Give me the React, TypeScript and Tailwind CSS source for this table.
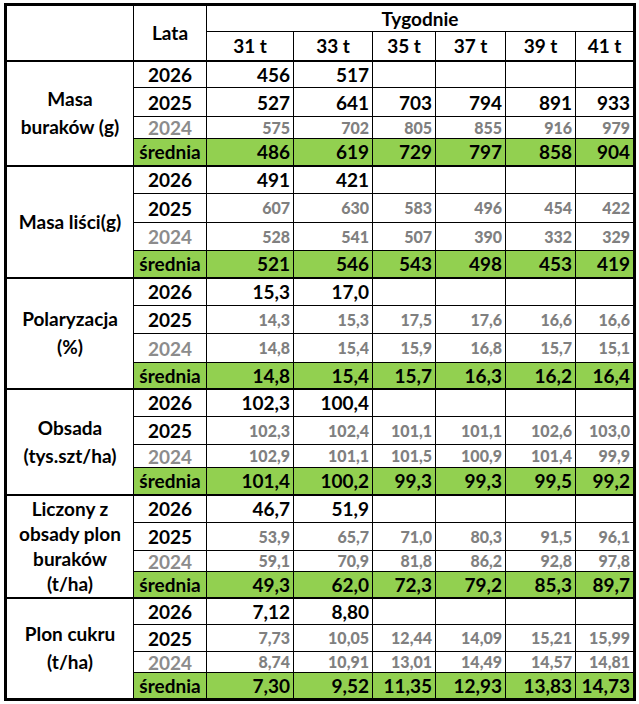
type Kind = 'black' | 'gray' | 'avg';

type Row = {
  year: string;
  kind: Kind;
  h: string;
  values: string[];
};

type Group = {
  label: string[];
  leading: string;
  rows: Row[];
};

const weeks = ['31 t', '33 t', '35 t', '37 t', '39 t', '41 t'];

const groups: Group[] = [
  {
    label: ['Masa', 'buraków (g)'],
    leading: 'leading-[28px]',
    rows: [
      { year: '2026', kind: 'black', h: 'h-[27px]', values: ['456', '517', '', '', '', ''] },
      { year: '2025', kind: 'black', h: 'h-[29px]', values: ['527', '641', '703', '794', '891', '933'] },
      { year: '2024', kind: 'gray', h: 'h-[22px]', values: ['575', '702', '805', '855', '916', '979'] },
      { year: 'średnia', kind: 'avg', h: 'h-[27px]', values: ['486', '619', '729', '797', '858', '904'] },
    ],
  },
  {
    label: ['Masa liści(g)'],
    leading: 'leading-[28px]',
    rows: [
      { year: '2026', kind: 'black', h: 'h-[28px]', values: ['491', '421', '', '', '', ''] },
      { year: '2025', kind: 'gray', h: 'h-[29px]', values: ['607', '630', '583', '496', '454', '422'] },
      { year: '2024', kind: 'gray', h: 'h-[28px]', values: ['528', '541', '507', '390', '332', '329'] },
      { year: 'średnia', kind: 'avg', h: 'h-[27px]', values: ['521', '546', '543', '498', '453', '419'] },
    ],
  },
  {
    label: ['Polaryzacja', '(%)'],
    leading: 'leading-[28px]',
    rows: [
      { year: '2026', kind: 'black', h: 'h-[28px]', values: ['15,3', '17,0', '', '', '', ''] },
      { year: '2025', kind: 'gray', h: 'h-[28px]', values: ['14,3', '15,3', '17,5', '17,6', '16,6', '16,6'] },
      { year: '2024', kind: 'gray', h: 'h-[29px]', values: ['14,8', '15,4', '15,9', '16,8', '15,7', '15,1'] },
      { year: 'średnia', kind: 'avg', h: 'h-[26px]', values: ['14,8', '15,4', '15,7', '16,3', '16,2', '16,4'] },
    ],
  },
  {
    label: ['Obsada', '(tys.szt/ha)'],
    leading: 'leading-[28px]',
    rows: [
      { year: '2026', kind: 'black', h: 'h-[28px]', values: ['102,3', '100,4', '', '', '', ''] },
      { year: '2025', kind: 'gray', h: 'h-[28px]', values: ['102,3', '102,4', '101,1', '101,1', '102,6', '103,0'] },
      { year: '2024', kind: 'gray', h: 'h-[23px]', values: ['102,9', '101,1', '101,5', '100,9', '101,4', '99,9'] },
      { year: 'średnia', kind: 'avg', h: 'h-[27px]', values: ['101,4', '100,2', '99,3', '99,3', '99,5', '99,2'] },
    ],
  },
  {
    label: ['Liczony z', 'obsady plon', 'buraków', '(t/ha)'],
    leading: 'leading-[25px]',
    rows: [
      { year: '2026', kind: 'black', h: 'h-[28px]', values: ['46,7', '51,9', '', '', '', ''] },
      { year: '2025', kind: 'gray', h: 'h-[28px]', values: ['53,9', '65,7', '71,0', '80,3', '91,5', '96,1'] },
      { year: '2024', kind: 'gray', h: 'h-[21px]', values: ['59,1', '70,9', '81,8', '86,2', '92,8', '97,8'] },
      { year: 'średnia', kind: 'avg', h: 'h-[26px]', values: ['49,3', '62,0', '72,3', '79,2', '85,3', '89,7'] },
    ],
  },
  {
    label: ['Plon cukru', '(t/ha)'],
    leading: 'leading-[28px]',
    rows: [
      { year: '2026', kind: 'black', h: 'h-[27px]', values: ['7,12', '8,80', '', '', '', ''] },
      { year: '2025', kind: 'gray', h: 'h-[27px]', values: ['7,73', '10,05', '12,44', '14,09', '15,21', '15,99'] },
      { year: '2024', kind: 'gray', h: 'h-[21px]', values: ['8,74', '10,91', '13,01', '14,49', '14,57', '14,81'] },
      { year: 'średnia', kind: 'avg', h: 'h-[27px]', values: ['7,30', '9,52', '11,35', '12,93', '13,83', '14,73'] },
    ],
  },
];

const valueClass: Record<Kind, string> = {
  black: 'text-[19px] text-black',
  gray: 'text-[16px] font-black text-[#808080]',
  avg: 'text-[19px] text-black bg-[#92d050]',
};

const yearClass: Record<string, string> = {
  '2026': 'text-black',
  '2025': 'text-black',
  '2024': 'text-[#8c8c8c]',
  'średnia': 'text-black bg-[#92d050]',
};

export default function App() {
  return (
    <div className="min-h-screen bg-white pl-[4px] pt-[3px] font-['Lato',sans-serif] font-bold">
      <table className="w-[629px] table-fixed border-collapse border-[3px] border-black">
        <colgroup>
          <col className="w-[128px]" />
          <col className="w-[73px]" />
          <col className="w-[87px]" />
          <col className="w-[79px]" />
          <col className="w-[63px]" />
          <col className="w-[70px]" />
          <col className="w-[70px]" />
          <col className="w-[59px]" />
        </colgroup>
        <thead>
          <tr className="h-[27px]">
            <th rowSpan={2} className="border border-b-2 border-black" />
            <th rowSpan={2} className="border border-b-2 border-black text-center text-[19px] font-bold">
              Lata
            </th>
            <th colSpan={6} className="border border-black text-center text-[19px] font-bold leading-none">
              Tygodnie
            </th>
          </tr>
          <tr className="h-[29px]">
            {weeks.map((w) => (
              <th key={w} className="border border-b-2 border-black text-center text-[19px] font-bold leading-none">
                {w}
              </th>
            ))}
          </tr>
        </thead>
        <tbody>
          {groups.map((g) =>
            g.rows.map((r, i) => {
              const top = i === 0 ? 'border-t-2' : '';
              return (
                <tr key={g.label[0] + r.year} className={r.h}>
                  {i === 0 && (
                    <td
                      rowSpan={4}
                      className={`border border-t-2 border-black p-0 text-center align-middle text-[19px] text-black ${g.leading}`}
                    >
                      {g.label.map((l) => (
                        <div key={l}>{l}</div>
                      ))}
                    </td>
                  )}
                  <td className={`border border-black p-0 text-center text-[19px] leading-none ${top} ${yearClass[r.year]}`}>
                    {r.year}
                  </td>
                  {r.values.map((v, j) => (
                    <td
                      key={j}
                      className={`border border-black p-0 pr-[3px] text-right leading-none ${top} ${valueClass[r.kind]}`}
                    >
                      {v}
                    </td>
                  ))}
                </tr>
              );
            }),
          )}
        </tbody>
      </table>
    </div>
  );
}
